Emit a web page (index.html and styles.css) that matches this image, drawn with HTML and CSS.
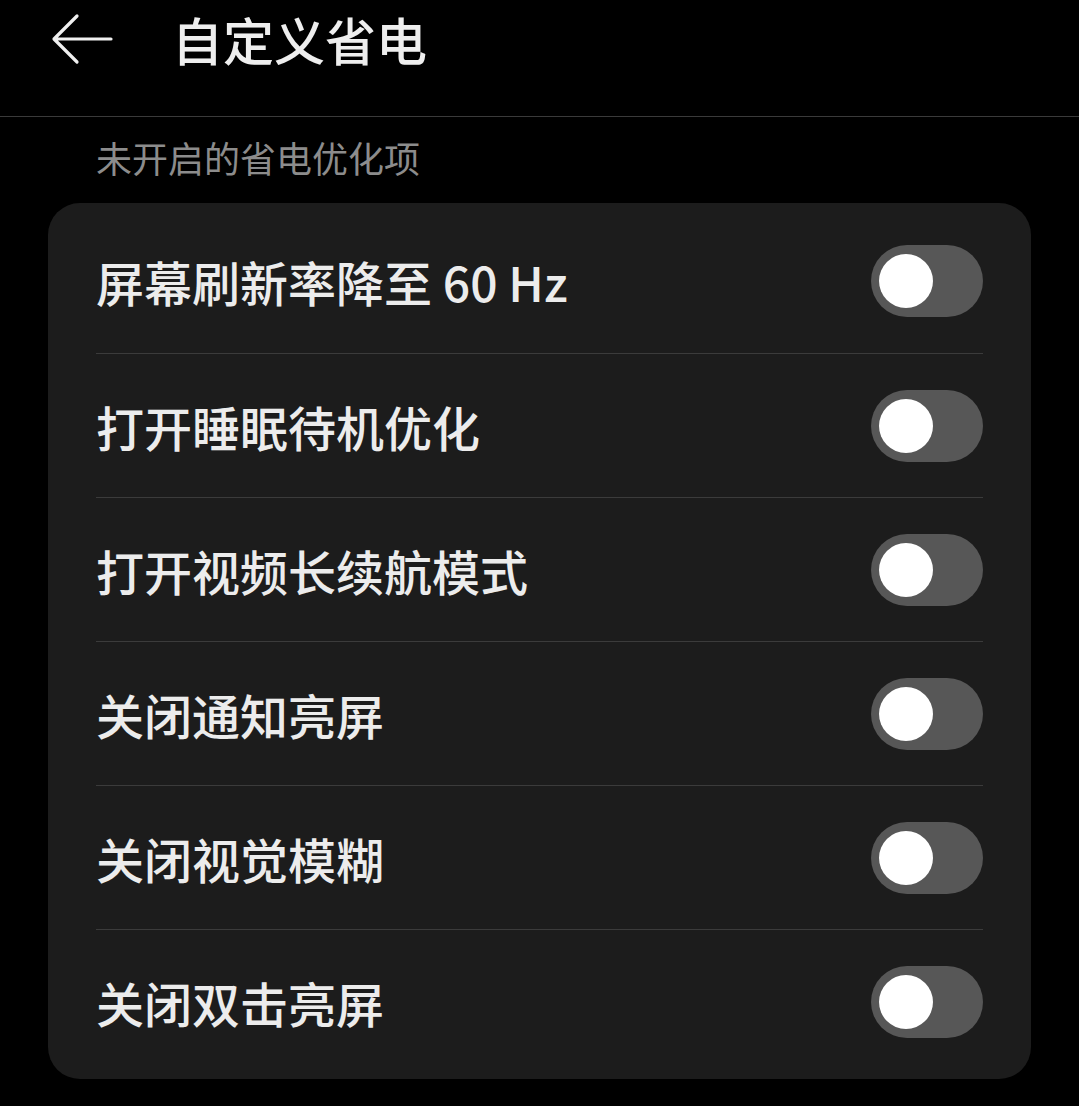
FILE: index.html
```html
<!DOCTYPE html>
<html lang="zh-CN">
<head>
    <meta charset="UTF-8">
    <meta name="viewport" content="width=device-width, initial-scale=1.0">
    <title>自定义省电</title>
    <link rel="stylesheet" href="styles.css">
</head>
<body>
    <header class="topbar">
        <span class="back">
            <svg width="64" height="52" viewBox="0 0 64 52">
                <path d="M61 26 H5 M27 3 L4 26 L27 49" fill="none" stroke="#f0f0f0" stroke-width="3.2" stroke-linecap="round" stroke-linejoin="round"/>
            </svg>
        </span>
        <h1>自定义省电</h1>
    </header>

    <div class="section-title">未开启的省电优化项</div>

    <div class="card">
        <div class="row">
            <span class="label">屏幕刷新率降至 60 Hz</span>
            <span class="switch"><span class="knob"></span></span>
        </div>
        <div class="row">
            <span class="label">打开睡眠待机优化</span>
            <span class="switch"><span class="knob"></span></span>
        </div>
        <div class="row">
            <span class="label">打开视频长续航模式</span>
            <span class="switch"><span class="knob"></span></span>
        </div>
        <div class="row">
            <span class="label">关闭通知亮屏</span>
            <span class="switch"><span class="knob"></span></span>
        </div>
        <div class="row">
            <span class="label">关闭视觉模糊</span>
            <span class="switch"><span class="knob"></span></span>
        </div>
        <div class="row">
            <span class="label">关闭双击亮屏</span>
            <span class="switch"><span class="knob"></span></span>
        </div>
    </div>
</body>
</html>
```

FILE: styles.css
```css
/* Основа */
body {
    margin: 0;
    background-color: #000000;
    color: #ececec;
    font-family: "Noto Sans CJK SC", "Noto Sans", sans-serif;
}

/* Шапка */
.topbar {
    height: 117px;
    box-sizing: border-box;
    padding: 0 0 39px 50px;
    border-bottom: 1px solid #3a3a3a;
    display: flex;
    align-items: center;
}

.back {
    display: flex;
    width: 64px;
    height: 52px;
    margin-right: 58px;
}

.topbar h1 {
    margin: 0;
    font-size: 51px;
    font-weight: 500;
    line-height: 60px;
    color: #eeeeee;
}

.section-title {
    margin: 16px 0 22px 96px;
    font-size: 36px;
    line-height: 48px;
    color: #8c8c8c;
}

/* Карточка */
.card {
    margin: 0 48px 26px 48px;
    padding: 6px 48px;
    background-color: #1c1c1c;
    border-radius: 32px;
}

.row {
    height: 144px;
    display: flex;
    align-items: center;
    justify-content: space-between;
    border-top: 1px solid #3b3b3b;
    box-sizing: border-box;
}

.row:first-child {
    border-top: none;
}

.label {
    font-size: 48px;
    font-weight: 500;
    color: #ececec;
}

/* Переключатель */
.switch {
    width: 112px;
    height: 72px;
    border-radius: 36px;
    background-color: #575757;
    display: flex;
    align-items: center;
    padding-left: 8px;
    box-sizing: border-box;
}

.knob {
    width: 54px;
    height: 54px;
    border-radius: 50%;
    background-color: #ffffff;
}
```
